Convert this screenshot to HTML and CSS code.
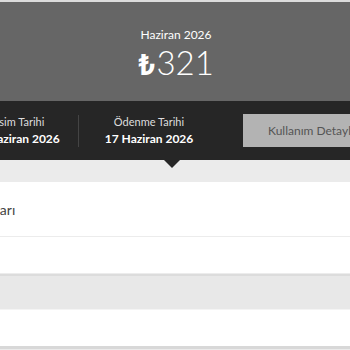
FILE: index.html
```html
<!DOCTYPE html>
<html lang="tr">
<head>
<meta charset="UTF-8">
<meta name="viewport" content="width=device-width, initial-scale=1.0">
<title>Fatura</title>
<link rel="stylesheet" href="styles.css">
</head>
<body>
<div class="summary">
<div class="period">Haziran 2026</div>
<div class="amount"><span class="lira">₺</span>321</div>
</div>
<div class="info-bar">
<div class="info-col first">
<span class="label">Kesim Tarihi</span>
<span class="value">10 Haziran 2026</span>
</div>
<div class="divider"></div>
<div class="info-col">
<span class="label">Ödenme Tarihi</span>
<span class="value">17 Haziran 2026</span>
</div>
<button class="details">Kullanım Detayları</button>
<div class="pointer"></div>
</div>
<div class="gap"></div>
<div class="row tall"><span class="row-text">Faturaları</span></div>
<div class="row"></div>
<div class="band"></div>
<div class="row last"></div>
</body>
</html>
```

FILE: styles.css
```css
body {
margin: 0;
font-family: Lato, "Open Sans", sans-serif;
background-color: #ebebeb;
overflow: hidden;
}
.summary {
border-top: 2px solid #dcdcdc;
height: 101px;
background-color: #666666;
color: white;
display: flex;
flex-direction: column;
align-items: center;
padding-left: 2px;
box-sizing: border-box;
}
.period {
font-size: 12px;
margin-top: 25px;
}
.amount {
font-size: 33px;
font-weight: 300;
line-height: 36px;
margin-top: 2px;
}
.lira {
font-family: Roboto, "Noto Sans", sans-serif;
font-weight: 700;
font-size: 29px;
margin-right: 1px;
}
.info-bar {
position: relative;
height: 59px;
background-color: #262626;
color: white;
display: flex;
align-items: center;
margin-left: -47px;
width: 460px;
}
.info-col {
width: 140px;
display: flex;
flex-direction: column;
align-items: center;
gap: 3px;
}
.info-col.first {
width: 125px;
}
.label {
font-size: 11px;
color: #dddddd;
}
.value {
font-size: 12px;
font-weight: 700;
}
.divider {
width: 1px;
height: 32px;
background-color: #444444;
}
.details {
margin-left: 24px;
width: 150px;
height: 33px;
border: none;
background-color: #b3b3b3;
color: #555555;
font-family: Lato, "Open Sans", sans-serif;
font-size: 12px;
text-align: left;
padding-left: 25px;
flex-shrink: 0;
}
.pointer {
position: absolute;
left: 211px;
bottom: -8px;
width: 0;
height: 0;
border-left: 8px solid transparent;
border-right: 8px solid transparent;
border-top: 8px solid #262626;
}
.gap {
height: 22px;
}
.row {
height: 36px;
background-color: white;
border-bottom: 1px solid #ececec;
display: flex;
align-items: center;
}
.row.tall {
height: 54px;
}
.row-text {
font-size: 14px;
color: #444444;
margin-left: -42px;
}
.band {
height: 33px;
background-color: #e8e8e8;
border-top: 2px solid #dcdcdc;
border-bottom: 1px solid #f4f4f4;
}
.row.last {
height: 36px;
border-bottom: 3px solid #d8d8d8;
}
```
